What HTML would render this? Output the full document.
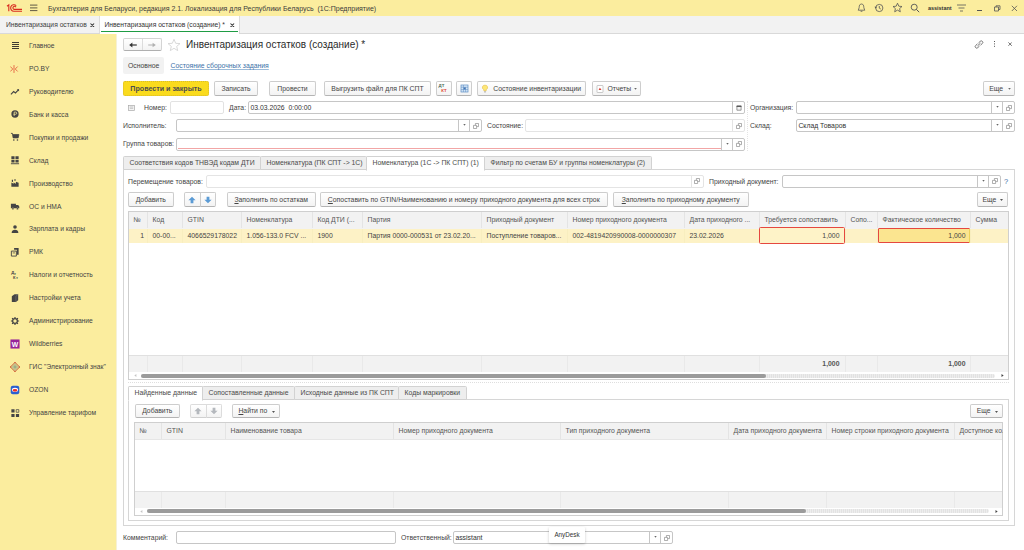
<!DOCTYPE html>
<html lang="ru">
<head>
<meta charset="utf-8">
<title>Инвентаризация остатков (создание) *</title>
<style>
*{box-sizing:border-box;margin:0;padding:0}
html,body{width:1024px;height:550px;overflow:hidden;background:#fff}
body{font-family:"Liberation Sans",sans-serif;font-size:6.85px;color:#444;position:relative;line-height:1}
.a{position:absolute;white-space:pre}
.t{position:absolute;white-space:pre;line-height:8px;height:8px}
#top{left:0;top:0;width:1024px;height:16px;background:#fbed9e}
#tabs{left:0;top:16px;width:1024px;height:17.5px;background:#f2f2f2;border-bottom:1px solid #d9d9d9}
#side{left:0;top:33.5px;width:117px;height:516.5px;background:#fbed9e;border-right:1px solid #f6f1d6}
.si{position:absolute;left:29px;white-space:pre;line-height:8px;color:#444;font-size:6.7px}
.ic{position:absolute;left:10.3px;width:10px;height:10px;margin-top:.7px}
.btn{position:absolute;border:1px solid #cdcdcd;border-bottom-color:#b4b4b4;border-radius:2px;background:linear-gradient(#fff,#f3f3f3);text-align:center;white-space:pre;color:#444}
.inp{position:absolute;border:1px solid #c6c6c6;border-radius:2px;background:#fff;padding-left:1.4px;white-space:pre;color:#333}
.tab{position:absolute;border:1px solid #d2d2d2;background:#eeeeee;text-align:left;padding-left:5.5px;white-space:pre;color:#4a4a4a;border-radius:1.5px 1.5px 0 0}
.tab.on{background:#fff;border-bottom-color:#fff}
.th{position:absolute;line-height:16.5px;padding-left:4.5px;border-right:1px solid #e4e4e4;white-space:pre;overflow:hidden;color:#555}
.td{position:absolute;height:16px;line-height:16.5px;padding-left:4.5px;white-space:pre;overflow:hidden;color:#444}
</style>
</head>
<body>

<div class="a" id="top"></div>
<svg class="a" style="left:6.3px;top:3.2px" width="17" height="10" viewBox="0 0 17 10">
 <g fill="none" stroke="#d92b1f" stroke-width="1.1">
  <path d="M1 3.2 L2.8 1.8 V8.2"/>
  <path d="M10.2 2.6 A3.3 3.3 0 1 0 8 8.3 H16"/>
  <path d="M10 4.2 A1.6 1.6 0 1 0 8.2 6.4 H16"/>
 </g>
</svg>
<svg class="a" style="left:29.8px;top:4.2px" width="9" height="8" viewBox="0 0 9 8"><g stroke="#4f4a3a" stroke-width=".9"><path d="M0 1.1H7.4M0 3.9H7.4M0 6.6H7.4"/></g></svg>
<div class="t" style="left:48px;top:4.5px;font-size:7px;color:#3c3c3c">Бухгалтерия для Беларуси, редакция 2.1. Локализация для Республики Беларусь  (1С:Предприятие)</div>
<!-- right icons -->
<svg class="a" style="left:857px;top:3px" width="9" height="10" viewBox="0 0 9 10"><path d="M4.5 1 C2.6 1 2.2 2.8 2.2 4.4 C2.2 5.8 1.2 6.6 1.2 7.2 H7.8 C7.8 6.6 6.8 5.8 6.8 4.4 C6.8 2.8 6.4 1 4.5 1Z M3.6 8.3 H5.4" fill="none" stroke="#555" stroke-width=".8"/></svg>
<svg class="a" style="left:874px;top:3px" width="10" height="10" viewBox="0 0 10 10"><circle cx="5.3" cy="5" r="3.6" fill="none" stroke="#555" stroke-width=".8"/><path d="M5.3 3V5.2L6.8 6" fill="none" stroke="#555" stroke-width=".8"/><path d="M0.4 3.8 L1.8 5.6 L3 3.8Z" fill="#555"/></svg>
<svg class="a" style="left:892px;top:2px" width="11" height="11" viewBox="0 0 11 11"><path d="M5.5 1.2 L6.8 4.2 L10 4.5 L7.6 6.6 L8.3 9.8 L5.5 8.1 L2.7 9.8 L3.4 6.6 L1 4.5 L4.2 4.2Z" fill="none" stroke="#555" stroke-width=".8" stroke-linejoin="round"/></svg>
<svg class="a" style="left:910px;top:3px" width="10" height="10" viewBox="0 0 10 10"><circle cx="4.2" cy="4.2" r="3" fill="none" stroke="#555" stroke-width=".9"/><path d="M6.4 6.4L9.2 9.2" stroke="#555" stroke-width="1"/></svg>
<div class="t" style="left:928px;top:5px;font-size:5.45px;font-weight:bold;color:#333;line-height:7px">assistant</div>
<svg class="a" style="left:957px;top:4px" width="10" height="8" viewBox="0 0 10 8"><g stroke="#555" stroke-width=".8"><path d="M0 1H9M1.5 4H7.5M3 7H6"/></g></svg>
<div class="a" style="left:977px;top:10px;width:5px;height:1px;background:#555"></div>
<svg class="a" style="left:994px;top:5px" width="7" height="7" viewBox="0 0 7 7"><path d="M0.5 2H4.5V6H0.5Z M2 2V0.8H6V4.5H4.5" fill="none" stroke="#555" stroke-width=".8"/></svg>
<svg class="a" style="left:1011px;top:5px" width="7" height="7" viewBox="0 0 7 7"><path d="M0.8 0.8L6 6M6 0.8L0.8 6" stroke="#555" stroke-width=".8"/></svg>


<div class="a" id="tabs"></div>
<div class="t" style="left:6px;top:21px;font-size:6.72px;color:#3c3c3c">Инвентаризация остатков</div>
<svg class="a" style="left:90.2px;top:22.7px" width="4.6" height="4.6" viewBox="0 0 4.6 4.6"><path d="M0.5 0.5L4.1 4.1M4.1 0.5L0.5 4.1" stroke="#333" stroke-width="1.05"/></svg>
<div class="a" style="left:98.5px;top:16px;width:1px;height:17px;background:#dcdcdc"></div>
<div class="a" style="left:99.5px;top:16px;width:139.5px;height:17.5px;background:#fff"></div>
<div class="a" style="left:101px;top:30.5px;width:136.5px;height:1.4px;background:#1f9c44"></div>
<div class="a" style="left:239px;top:16px;width:1px;height:17px;background:#dcdcdc"></div>
<div class="t" style="left:104.5px;top:21px;font-size:6.72px;color:#333">Инвентаризация остатков (создание) *</div>
<svg class="a" style="left:230.2px;top:22.7px" width="4.6" height="4.6" viewBox="0 0 4.6 4.6"><path d="M0.5 0.5L4.1 4.1M4.1 0.5L0.5 4.1" stroke="#333" stroke-width="1.05"/></svg>
<!-- sidebar -->
<div class="a" id="side"></div>
<svg class="a" style="left:12px;top:42px" width="7" height="7" viewBox="0 0 7 7" shape-rendering="crispEdges"><g fill="#3d3a33"><rect x="0" y="0" width="7" height="1"/><rect x="0" y="2" width="7" height="1"/><rect x="0" y="4" width="7" height="1"/><rect x="0" y="6" width="7" height="1"/></g></svg><div class="si" style="top:42px">Главное</div>
<svg class="ic" style="top:63.0px" viewBox="0 0 11 11"><g stroke="#e2553a" stroke-width=".9" fill="none"><path d="M4.4 1.2V9.8M0.4 2.8L3 5.5L0.4 8.2M8.4 2.8L5.8 5.5L8.4 8.2"/></g></svg><div class="si" style="top:65px">PO.BY</div>
<svg class="ic" style="top:85.9px" viewBox="0 0 11 11"><path d="M1 8L4 5L6 6.5L9.5 3" fill="none" stroke="#444" stroke-width="1.2"/><path d="M7.5 2.5H10V5Z" fill="#444"/></svg><div class="si" style="top:88px">Руководителю</div>
<svg class="ic" style="top:108.8px" viewBox="0 0 11 11"><circle cx="5.5" cy="5.5" r="4" fill="#444"/><path d="M4.6 7.8V3.4H6.2A1.2 1.2 0 0 1 6.2 5.8H3.8" stroke="#fbed9e" stroke-width=".8" fill="none"/></svg><div class="si" style="top:111px">Банк и касса</div>
<svg class="ic" style="top:131.8px" viewBox="0 0 11 11"><path d="M1 1.5H2.6L3.4 6.5H9L9.8 2.8H3" fill="#444" stroke="#444" stroke-width=".8"/><circle cx="4.2" cy="8.8" r=".9" fill="#444"/><circle cx="8.2" cy="8.8" r=".9" fill="#444"/></svg><div class="si" style="top:134px">Покупки и продажи</div>
<svg class="ic" style="top:154.8px" viewBox="0 0 11 11"><path d="M1.5 1.5H5V4.6H1.5ZM6 1.5H9.5V4.6H6ZM1.5 5.4H5V8.2H1.5ZM6 5.4H9.5V8.2H6Z" fill="#444"/><path d="M1 9.6H10" stroke="#444" stroke-width="1"/></svg><div class="si" style="top:157px">Склад</div>
<svg class="ic" style="top:177.7px" viewBox="0 0 11 11"><path d="M1.5 9.5V5L4 6.2V5L6.5 6.2V4L9.5 5.2V9.5Z" fill="#444"/><path d="M2 4V2H3.3V4.5Z" fill="#444"/><path d="M4.5 2.2l1-1 1 1-1 1z" fill="#444"/></svg><div class="si" style="top:180px">Производство</div>
<svg class="ic" style="top:200.7px" viewBox="0 0 11 11"><path d="M1 3H6.5V8H1ZM6.5 4.5H9L10.2 6V8H6.5Z" fill="#444"/><circle cx="3.2" cy="8.5" r="1.1" fill="#444" stroke="#fbed9e" stroke-width=".4"/><circle cx="8.2" cy="8.5" r="1.1" fill="#444" stroke="#fbed9e" stroke-width=".4"/></svg><div class="si" style="top:203px">ОС и НМА</div>
<svg class="ic" style="top:223.6px" viewBox="0 0 11 11"><circle cx="5.5" cy="3.3" r="2" fill="#444"/><path d="M1.8 9.8C1.8 7.4 3.4 6.2 5.5 6.2S9.2 7.4 9.2 9.8Z" fill="#444"/></svg><div class="si" style="top:225px">Зарплата и кадры</div>
<svg class="ic" style="top:246.5px" viewBox="0 0 11 11"><path d="M1.5 4.5H7V10H1.5Z" fill="none" stroke="#444" stroke-width="1"/><path d="M4.5 1H9.5V8.5H7.5V3H4.5Z" fill="#444"/><path d="M3 6.5H5.5" stroke="#444" stroke-width=".8"/></svg><div class="si" style="top:248px">РМК</div>
<svg class="ic" style="top:269.5px" viewBox="0 0 11 11"><g fill="#444" font-family="Liberation Sans, sans-serif" font-weight="bold" font-size="4.5"><text x="1.5" y="4.6">Д</text><text x="4.5" y="5.2">т</text><text x="3.4" y="9.6">К</text><text x="6.5" y="10">т</text></g></svg><div class="si" style="top:271px">Налоги и отчетность</div>
<svg class="ic" style="top:292.4px" viewBox="0 0 11 11"><path d="M2 3.5L5 1.5H9V8L6.5 10H2Z" fill="#444"/><path d="M6.5 3.5V10M6.5 3.5L9 1.5" stroke="#888" stroke-width=".5" fill="none"/></svg><div class="si" style="top:294px">Настройки учета</div>
<svg class="ic" style="top:315.4px" viewBox="0 0 11 11"><circle cx="5.5" cy="5.5" r="2.6" fill="none" stroke="#444" stroke-width="1.4"/><g stroke="#444" stroke-width="1.3"><path d="M5.5 1V2.4M5.5 8.6V10M1 5.5H2.4M8.6 5.5H10M2.3 2.3L3.3 3.3M7.7 7.7L8.7 8.7M8.7 2.3L7.7 3.3M2.3 8.7L3.3 7.7"/></g></svg><div class="si" style="top:317px">Администрирование</div>
<svg class="ic" style="top:338.3px" viewBox="0 0 11 11"><rect x="0.5" y="0.5" width="10" height="10" fill="#96249a"/><text x="5.5" y="8.3" font-family="Liberation Sans, sans-serif" font-weight="bold" font-size="7.5" fill="#fff" text-anchor="middle">W</text></svg><div class="si" style="top:340px">Wildberries</div>
<svg class="ic" style="top:361.3px" viewBox="0 0 11 11"><path d="M5.5 0.3L10.7 5.5L5.5 10.7L0.3 5.5Z" fill="#c9c38a" stroke="#d8643c" stroke-width=".9"/><circle cx="5.5" cy="5.5" r="1.6" fill="#9bb08a"/><g fill="#d8643c"><circle cx="5.5" cy="0.6" r=".8"/><circle cx="5.5" cy="10.4" r=".8"/><circle cx="0.6" cy="5.5" r=".8"/><circle cx="10.4" cy="5.5" r=".8"/></g></svg><div class="si" style="top:363px">ГИС "Электронный знак"</div>
<svg class="ic" style="top:384.2px" viewBox="0 0 11 11"><rect x="0.8" y="0.8" width="9.4" height="9.4" rx="2.2" fill="#2b5fd0"/><ellipse cx="5.5" cy="5.3" rx="3.4" ry="2.4" fill="#fff"/><ellipse cx="5.5" cy="5.8" rx="2.6" ry="1.5" fill="#e8302a"/></svg><div class="si" style="top:386px">OZON</div>
<svg class="ic" style="top:407.2px" viewBox="0 0 11 11"><path d="M1.5 1.5H5V5H1.5ZM1.5 6.5H5V10H1.5ZM6.5 6.5H10V10H6.5Z" fill="#444"/><path d="M6.8 1.8H9.7V4.7H6.8Z" fill="none" stroke="#444" stroke-width=".8"/></svg><div class="si" style="top:409px">Управление тарифом</div>
<div class="btn" style="left:123px;top:38px;width:39px;height:12.5px;border-color:#d4d4d4;border-bottom-color:#b0b0b0"></div>
<div class="a" style="left:142px;top:39px;width:1px;height:10.5px;background:#dcdcdc"></div>
<svg class="a" style="left:129px;top:41.5px" width="8" height="6" viewBox="0 0 8 6"><path d="M7.8 3H2.5" fill="none" stroke="#333" stroke-width="1.2"/><path d="M0.2 3L3.4 0.6V5.4Z" fill="#333"/></svg>
<svg class="a" style="left:148px;top:41.5px" width="8" height="6" viewBox="0 0 8 6"><path d="M0.2 3H5.5" fill="none" stroke="#b0b0b0" stroke-width="1"/><path d="M7.8 3L4.6 0.7V5.3Z" fill="#b0b0b0"/></svg>
<svg class="a" style="left:167px;top:37.6px" width="14" height="14" viewBox="0 0 14 14"><path d="M7 1.3 L8.7 5.3 L13 5.6 L9.7 8.4 L10.7 12.6 L7 10.3 L3.3 12.6 L4.3 8.4 L1 5.6 L5.3 5.3Z" fill="none" stroke="#cfcfcf" stroke-width=".8" stroke-linejoin="round"/></svg>
<div class="a" style="left:186px;top:38px;font-size:10px;line-height:13px;color:#2b2b2b">Инвентаризация остатков (создание) *</div>
<svg class="a" style="left:973.5px;top:39.5px" width="10" height="9" viewBox="0 0 10 9"><g fill="none" stroke="#6e6e6e" stroke-width=".9" stroke-linecap="round" transform="rotate(-42 5 4.5)"><path d="M3.9 3H1.9A1.5 1.5 0 0 0 1.9 6H3.9"/><path d="M6.1 3H8.1A1.5 1.5 0 0 1 8.1 6H6.1"/><path d="M3.4 4.5H6.6"/></g></svg>
<div class="a" style="left:993.7px;top:41px;width:1.2px;height:1.2px;background:#555;box-shadow:0 2.4px 0 #555,0 4.8px 0 #555"></div>
<svg class="a" style="left:1008.2px;top:42px" width="4.2" height="4.2" viewBox="0 0 4.2 4.2"><path d="M0.4 0.4L3.8 3.8M3.8 0.4L0.4 3.8" stroke="#666" stroke-width=".9"/></svg>
<div class="a" style="left:123px;top:57px;width:41px;height:17px;background:#f2f2f2;border-radius:2px"></div>
<div class="t" style="left:128px;top:62px;color:#444">Основное</div>
<div class="t" style="left:170.5px;top:62px;color:#3d72a8;text-decoration:underline;text-decoration-color:#9dbbd8;text-decoration-thickness:.7px;text-underline-offset:1px">Состояние сборочных задания</div>
<div class="btn" style="left:123px;top:81px;width:86px;height:15px;line-height:13px;background:#fadb1e;border:1px dotted #d9bd2a;font-weight:bold;color:#4c4c50;font-size:7.12px;padding-top:1px">Провести и закрыть</div>
<div class="btn" style="left:214px;top:81px;width:44px;height:15px;line-height:13px;">Записать</div>
<div class="btn" style="left:269px;top:81px;width:47px;height:15px;line-height:13px;">Провести</div>
<div class="btn" style="left:324px;top:81px;width:107px;height:15px;line-height:13px;">Выгрузить файл для ПК СПТ</div>
<div class="btn" style="left:436px;top:81px;width:16px;height:15px;line-height:13px;"></div>
<div class="a" style="left:438.6px;top:84.3px;font-size:4.3px;font-weight:bold;line-height:4.3px;color:#4b6a58">ДТ<br><span style="color:#e0402f;padding-left:2.6px">КТ</span></div>
<div class="btn" style="left:456px;top:81px;width:16px;height:15px;line-height:13px;"></div>
<svg class="a" style="left:459.5px;top:84px" width="9" height="9" viewBox="0 0 9 9"><rect x="1" y="1" width="7" height="7" fill="#dcebf9" stroke="#5b8cc4" stroke-width=".7"/><path d="M1 3.2H8M3.4 1V8M5.6 3.2V8M1 5.6H8" stroke="#5b8cc4" stroke-width=".55"/><rect x="3.6" y="3.4" width="2" height="2" fill="#3f74b3"/></svg>
<div class="btn" style="left:477px;top:81px;width:109px;height:15px;line-height:13px;">      Состояние инвентаризации</div>
<svg class="a" style="left:481px;top:84px" width="8" height="10" viewBox="0 0 8 10"><path d="M4 1.2A2.3 2.3 0 0 0 2.8 5.6V6.8H5.2V5.6A2.3 2.3 0 0 0 4 1.2Z" fill="#fde777" stroke="#e3b838" stroke-width=".55"/><path d="M3 7.9H5" stroke="#9a9a9a" stroke-width=".8"/></svg>
<div class="btn" style="left:592px;top:81px;width:49px;height:15px;line-height:13px;">     Отчеты  </div>
<svg class="a" style="left:596px;top:85px" width="8" height="8" viewBox="0 0 8 8"><rect x="1" y=".5" width="6" height="7" rx=".6" fill="#fff" stroke="#a8a8a8" stroke-width=".6"/><path d="M2.6 5L3.8 2.8L5.2 4.2V5Z" fill="#d9443a"/></svg>
<svg class="a" style="left:633.5px;top:88px" width="3" height="2" viewBox="0 0 3 2"><path d="M0.2 0H2.8L1.5 1.8Z" fill="#666"/></svg>
<div class="btn" style="left:983px;top:81px;width:32px;height:15px;line-height:13px;">Еще   </div>
<svg class="a" style="left:1007.5px;top:88px" width="3" height="2" viewBox="0 0 3 2"><path d="M0.2 0H2.8L1.5 1.8Z" fill="#666"/></svg>
<svg class="a" style="left:128px;top:104.5px" width="7" height="6" viewBox="0 0 7 6"><rect x=".4" y=".4" width="6.2" height="5.2" fill="#f4f4f4" stroke="#aaa" stroke-width=".7"/><path d="M1.8 2H5.2M1.8 3.4H5.2" stroke="#aaa" stroke-width=".6"/></svg>
<div class="t" style="left:144px;top:103.5px;">Номер:</div>
<div class="inp" style="left:170px;top:101px;width:54px;height:13px;line-height:11px;border-color:#e2e2e2;"></div>
<div class="t" style="left:229px;top:103.5px;">Дата:</div>
<div class="inp" style="left:248px;top:101px;width:497px;height:13px;line-height:11px;border-color:#c6c6c6;">03.03.2026  0:00:00</div>
<div class="a" style="left:732px;top:102px;width:1px;height:11px;background:#c6c6c6"></div>
<svg class="a" style="left:735.9px;top:104.5px" width="6" height="6" viewBox="0 0 6 6"><path d="M0.9 1H5.1V5.2H0.9Z" fill="#f4f4f4" stroke="#707070" stroke-width=".7"/><path d="M0.6 1.3H5.4" stroke="#555" stroke-width="1.3"/></svg>
<div class="t" style="left:750px;top:103.5px;">Организация:</div>
<div class="inp" style="left:796px;top:101px;width:219px;height:13px;line-height:11px;border-color:#c6c6c6;"></div>
<div class="a" style="left:991px;top:102px;width:1px;height:11px;background:#c6c6c6"></div>
<svg class="a" style="left:995.8px;top:106.0px" width="3" height="2" viewBox="0 0 3 2"><path d="M0.3 0H2.7L1.5 1.7Z" fill="#666"/></svg>
<div class="a" style="left:1002px;top:102px;width:1px;height:11px;background:#c6c6c6"></div>
<svg class="a" style="left:1005.9px;top:104.5px" width="6" height="6" viewBox="0 0 6 6"><path d="M2.4 0.5H5.5V3.6H2.4Z" fill="none" stroke="#7a7a7a" stroke-width=".6" stroke-linejoin="miter"/><path d="M0.5 2.4H3.6V5.5H0.5Z" fill="#fff" stroke="#7a7a7a" stroke-width=".6" stroke-linejoin="miter"/></svg>
<div class="a" style="left:746.5px;top:101px;width:0;height:50px;border-left:1px dotted #e4e4e4"></div>
<div class="t" style="left:123px;top:122px;">Исполнитель:</div>
<div class="inp" style="left:176px;top:119px;width:306px;height:13px;line-height:11px;border-color:#c6c6c6;"></div>
<div class="a" style="left:458px;top:120px;width:1px;height:11px;background:#c6c6c6"></div>
<svg class="a" style="left:462.8px;top:124.0px" width="3" height="2" viewBox="0 0 3 2"><path d="M0.3 0H2.7L1.5 1.7Z" fill="#666"/></svg>
<div class="a" style="left:469px;top:120px;width:1px;height:11px;background:#c6c6c6"></div>
<svg class="a" style="left:472.9px;top:122.5px" width="6" height="6" viewBox="0 0 6 6"><path d="M2.4 0.5H5.5V3.6H2.4Z" fill="none" stroke="#7a7a7a" stroke-width=".6" stroke-linejoin="miter"/><path d="M0.5 2.4H3.6V5.5H0.5Z" fill="#fff" stroke="#7a7a7a" stroke-width=".6" stroke-linejoin="miter"/></svg>
<div class="t" style="left:487px;top:122px;">Состояние:</div>
<div class="inp" style="left:525px;top:119px;width:220px;height:13px;line-height:11px;border-color:#e4e4e4;"></div>
<div class="a" style="left:732px;top:120px;width:1px;height:11px;background:#e4e4e4"></div>
<svg class="a" style="left:735.9px;top:122.5px" width="6" height="6" viewBox="0 0 6 6"><path d="M2.4 0.5H5.5V3.6H2.4Z" fill="none" stroke="#7a7a7a" stroke-width=".6" stroke-linejoin="miter"/><path d="M0.5 2.4H3.6V5.5H0.5Z" fill="#fff" stroke="#7a7a7a" stroke-width=".6" stroke-linejoin="miter"/></svg>
<div class="t" style="left:750px;top:122px;">Склад:</div>
<div class="inp" style="left:796px;top:119px;width:219px;height:13px;line-height:11px;border-color:#c6c6c6;">Склад Товаров</div>
<div class="a" style="left:991px;top:120px;width:1px;height:11px;background:#c6c6c6"></div>
<svg class="a" style="left:995.8px;top:124.0px" width="3" height="2" viewBox="0 0 3 2"><path d="M0.3 0H2.7L1.5 1.7Z" fill="#666"/></svg>
<div class="a" style="left:1002px;top:120px;width:1px;height:11px;background:#c6c6c6"></div>
<svg class="a" style="left:1005.9px;top:122.5px" width="6" height="6" viewBox="0 0 6 6"><path d="M2.4 0.5H5.5V3.6H2.4Z" fill="none" stroke="#7a7a7a" stroke-width=".6" stroke-linejoin="miter"/><path d="M0.5 2.4H3.6V5.5H0.5Z" fill="#fff" stroke="#7a7a7a" stroke-width=".6" stroke-linejoin="miter"/></svg>
<div class="t" style="left:123px;top:140px;">Группа товаров:</div>
<div class="inp" style="left:176px;top:137.5px;width:569px;height:13.0px;line-height:11.0px;border-color:#c6c6c6;"></div>
<div class="a" style="left:721px;top:138.5px;width:1px;height:11.0px;background:#c6c6c6"></div>
<svg class="a" style="left:725.8px;top:142.5px" width="3" height="2" viewBox="0 0 3 2"><path d="M0.3 0H2.7L1.5 1.7Z" fill="#666"/></svg>
<div class="a" style="left:732px;top:138.5px;width:1px;height:11.0px;background:#c6c6c6"></div>
<svg class="a" style="left:735.9px;top:141.0px" width="6" height="6" viewBox="0 0 6 6"><path d="M2.4 0.5H5.5V3.6H2.4Z" fill="none" stroke="#7a7a7a" stroke-width=".6" stroke-linejoin="miter"/><path d="M0.5 2.4H3.6V5.5H0.5Z" fill="#fff" stroke="#7a7a7a" stroke-width=".6" stroke-linejoin="miter"/></svg>
<div class="a" style="left:178px;top:148px;width:543px;height:1px;background:#f2a6a6"></div>
<div class="a" style="left:123px;top:169px;width:892px;height:357px;border:1px solid #d6d6d6;background:#fff"></div>
<div class="tab" style="left:123px;top:156px;width:138px;height:14px;line-height:12.4px">Соответствия кодов ТНВЭД кодам ДТИ</div>
<div class="tab" style="left:260px;top:156px;width:107px;height:14px;line-height:12.4px">Номенклатура (ПК СПТ -&gt; 1С)</div>
<div class="tab" style="left:484px;top:156px;width:168px;height:14px;line-height:12.4px">Фильтр по счетам БУ и группы номенклатуры (2)</div>
<div class="tab on" style="left:366px;top:156px;width:119px;height:15px;line-height:12.4px">Номенклатура (1С -&gt; ПК СПТ) (1)</div>
<div class="t" style="left:128px;top:177.5px;">Перемещение товаров:</div>
<div class="inp" style="left:206px;top:174.5px;width:497.5px;height:13.0px;line-height:11.0px;border-color:#e4e4e4;"></div>
<div class="a" style="left:690.5px;top:175.5px;width:1px;height:11.0px;background:#e4e4e4"></div>
<svg class="a" style="left:694.4px;top:178.0px" width="6" height="6" viewBox="0 0 6 6"><path d="M2.4 0.5H5.5V3.6H2.4Z" fill="none" stroke="#7a7a7a" stroke-width=".6" stroke-linejoin="miter"/><path d="M0.5 2.4H3.6V5.5H0.5Z" fill="#fff" stroke="#7a7a7a" stroke-width=".6" stroke-linejoin="miter"/></svg>
<div class="t" style="left:709px;top:177.5px;">Приходный документ:</div>
<div class="inp" style="left:782px;top:174.5px;width:219px;height:13.0px;line-height:11.0px;border-color:#c6c6c6;"></div>
<div class="a" style="left:977px;top:175.5px;width:1px;height:11.0px;background:#c6c6c6"></div>
<svg class="a" style="left:981.8px;top:179.5px" width="3" height="2" viewBox="0 0 3 2"><path d="M0.3 0H2.7L1.5 1.7Z" fill="#666"/></svg>
<div class="a" style="left:988px;top:175.5px;width:1px;height:11.0px;background:#c6c6c6"></div>
<svg class="a" style="left:991.9px;top:178.0px" width="6" height="6" viewBox="0 0 6 6"><path d="M2.4 0.5H5.5V3.6H2.4Z" fill="none" stroke="#7a7a7a" stroke-width=".6" stroke-linejoin="miter"/><path d="M0.5 2.4H3.6V5.5H0.5Z" fill="#fff" stroke="#7a7a7a" stroke-width=".6" stroke-linejoin="miter"/></svg>
<div class="t" style="left:1004px;top:177.5px;color:#3a6ea5;font-size:7.5px">?</div>
<div class="btn" style="left:128px;top:192px;width:45.5px;height:15px;line-height:13px;">Добавить</div>
<div class="btn" style="left:184px;top:192px;width:16.5px;height:15px;line-height:13px;border-radius:2px 0 0 2px"></div>
<div class="btn" style="left:199.5px;top:192px;width:16.5px;height:15px;line-height:13px;border-radius:0 2px 2px 0"></div>
<svg class="a" style="left:188px;top:195.8px" width="8" height="8" viewBox="0 0 8 8"><path d="M4 0.8L7.6 4.3H5.4V7.2H2.6V4.3H0.4Z" fill="#5b9bd5"/></svg>
<svg class="a" style="left:203.5px;top:195.8px" width="8" height="8" viewBox="0 0 8 8"><path d="M4 7.2L7.6 3.7H5.4V0.8H2.6V3.7H0.4Z" fill="#5b9bd5"/></svg>
<div class="btn" style="left:227px;top:192px;width:88.5px;height:15px;line-height:13px;"><u>З</u>аполнить по остаткам</div>
<div class="btn" style="left:320px;top:192px;width:287.5px;height:15px;line-height:13px;"><u>С</u>опоставить по GTIN/Наименованию и номеру приходного документа для всех строк</div>
<div class="btn" style="left:613px;top:192px;width:135.5px;height:15px;line-height:13px;"><u>З</u>аполнить по приходному документу</div>
<div class="btn" style="left:976.5px;top:192px;width:31.5px;height:15px;line-height:13px;">Еще   </div>
<svg class="a" style="left:1000px;top:199px" width="3" height="2" viewBox="0 0 3 2"><path d="M0 0H3L1.5 1.9Z" fill="#555"/></svg>
<div class="a" style="left:128px;top:211px;width:881px;height:169px;border:1px solid #cfcfcf;background:#fff"></div>
<div class="a" style="left:129px;top:212px;width:879px;height:16.8px;background:#f2f2f2"></div>
<div class="th" style="left:129px;top:212px;width:19px;height:16px;">№</div>
<div class="th" style="left:148px;top:212px;width:35px;height:16px;">Код</div>
<div class="th" style="left:183px;top:212px;width:59px;height:16px;">GTIN</div>
<div class="th" style="left:242px;top:212px;width:71px;height:16px;">Номенклатура</div>
<div class="th" style="left:313px;top:212px;width:50px;height:16px;">Код ДТИ (...</div>
<div class="th" style="left:363px;top:212px;width:119px;height:16px;">Партия</div>
<div class="th" style="left:482px;top:212px;width:86px;height:16px;">Приходный документ</div>
<div class="th" style="left:568px;top:212px;width:117px;height:16px;">Номер приходного документа</div>
<div class="th" style="left:685px;top:212px;width:75px;height:16px;">Дата приходного ...</div>
<div class="th" style="left:760px;top:212px;width:86px;height:16px;">Требуется сопоставить</div>
<div class="th" style="left:846px;top:212px;width:32px;height:16px;">Сопо...</div>
<div class="th" style="left:878px;top:212px;width:93px;height:16px;">Фактическое количество</div>
<div class="th" style="left:971px;top:212px;width:38px;height:16px;border-right:none;">Сумма</div>
<div class="a" style="left:129px;top:228.8px;width:879px;height:14.4px;background:#fdf2c6"></div>
<div class="td" style="left:129px;top:227.9px;width:19px;text-align:right;padding-right:4px;padding-left:0;">1</div>
<div class="td" style="left:148px;top:227.9px;width:35px;">00-00...</div>
<div class="td" style="left:183px;top:227.9px;width:59px;">4066529178022</div>
<div class="td" style="left:242px;top:227.9px;width:71px;">1.056-133.0 FCV ...</div>
<div class="td" style="left:313px;top:227.9px;width:50px;">1900</div>
<div class="td" style="left:363px;top:227.9px;width:119px;">Партия 0000-000531 от 23.02.20...</div>
<div class="td" style="left:482px;top:227.9px;width:86px;">Поступление товаров...</div>
<div class="td" style="left:568px;top:227.9px;width:117px;">002-4819420990008-0000000307</div>
<div class="td" style="left:685px;top:227.9px;width:75px;">23.02.2026</div>
<div class="td" style="left:760px;top:227.9px;width:86px;"></div>
<div class="td" style="left:846px;top:227.9px;width:32px;"></div>
<div class="td" style="left:878px;top:227.9px;width:93px;"></div>
<div class="td" style="left:971px;top:227.9px;width:38px;"></div>
<div class="a" style="left:147px;top:228.8px;width:1px;height:14.4px;background:#f8eebf"></div>
<div class="a" style="left:182px;top:228.8px;width:1px;height:14.4px;background:#f8eebf"></div>
<div class="a" style="left:241px;top:228.8px;width:1px;height:14.4px;background:#f8eebf"></div>
<div class="a" style="left:312px;top:228.8px;width:1px;height:14.4px;background:#f8eebf"></div>
<div class="a" style="left:362px;top:228.8px;width:1px;height:14.4px;background:#f8eebf"></div>
<div class="a" style="left:481px;top:228.8px;width:1px;height:14.4px;background:#f8eebf"></div>
<div class="a" style="left:567px;top:228.8px;width:1px;height:14.4px;background:#f8eebf"></div>
<div class="a" style="left:684px;top:228.8px;width:1px;height:14.4px;background:#f8eebf"></div>
<div class="a" style="left:759px;top:228.8px;width:1px;height:14.4px;background:#f8eebf"></div>
<div class="a" style="left:845px;top:228.8px;width:1px;height:14.4px;background:#f8eebf"></div>
<div class="a" style="left:877px;top:228.8px;width:1px;height:14.4px;background:#f8eebf"></div>
<div class="a" style="left:970px;top:228.8px;width:1px;height:14.4px;background:#f8eebf"></div>
<div class="a" style="left:759px;top:227px;width:86px;height:17px;border:1.5px solid #e5483f;border-radius:1.5px;background:#fef3c8"></div>
<div class="td" style="left:759px;top:227.9px;width:85px;text-align:right;padding-right:4.5px">1,000</div>
<div class="a" style="left:877.5px;top:228.2px;width:92px;height:15px;border:1.4px solid #e5483f;border-radius:1px;background:#fbe590"></div>
<div class="a" style="left:969.3px;top:228.8px;width:.8px;height:14.4px;background:#ecd25a"></div>
<div class="td" style="left:878px;top:227.9px;width:92px;text-align:right;padding-right:4.5px">1,000</div>
<div class="a" style="left:129px;top:355px;width:879px;height:16.5px;background:#f2f2f2;border-top:1px solid #e0e0e0"></div>
<div class="a" style="left:147px;top:356px;width:1px;height:15.5px;background:#e9e9e9"></div>
<div class="a" style="left:182px;top:356px;width:1px;height:15.5px;background:#e9e9e9"></div>
<div class="a" style="left:241px;top:356px;width:1px;height:15.5px;background:#e9e9e9"></div>
<div class="a" style="left:312px;top:356px;width:1px;height:15.5px;background:#e9e9e9"></div>
<div class="a" style="left:362px;top:356px;width:1px;height:15.5px;background:#e9e9e9"></div>
<div class="a" style="left:481px;top:356px;width:1px;height:15.5px;background:#e9e9e9"></div>
<div class="a" style="left:567px;top:356px;width:1px;height:15.5px;background:#e9e9e9"></div>
<div class="a" style="left:684px;top:356px;width:1px;height:15.5px;background:#e9e9e9"></div>
<div class="a" style="left:759px;top:356px;width:1px;height:15.5px;background:#e9e9e9"></div>
<div class="a" style="left:845px;top:356px;width:1px;height:15.5px;background:#e9e9e9"></div>
<div class="a" style="left:877px;top:356px;width:1px;height:15.5px;background:#e9e9e9"></div>
<div class="a" style="left:970px;top:356px;width:1px;height:15.5px;background:#e9e9e9"></div>
<div class="td" style="left:759px;top:355.5px;width:85px;text-align:right;padding-right:4.5px;font-weight:bold;color:#555">1,000</div>
<div class="td" style="left:878px;top:355.5px;width:92px;text-align:right;padding-right:4.5px;font-weight:bold;color:#555">1,000</div>
<div class="a" style="left:141px;top:373.7px;width:854px;height:4px;background:repeating-linear-gradient(90deg,#e2e2e2 0 1px,#ededed 1px 2px);border-radius:2px"></div>
<div class="a" style="left:141px;top:373.7px;width:625px;height:4px;background:#9b9b9b;border-radius:2px"></div>
<svg class="a" style="left:133.5px;top:374.2px" width="3" height="3" viewBox="0 0 3 3"><path d="M2.4 0V3L0.3 1.5Z" fill="#c4c4c4"/></svg>
<svg class="a" style="left:1000.5px;top:374.2px" width="3" height="3" viewBox="0 0 3 3"><path d="M0.5 0V3L2.7 1.5Z" fill="#444"/></svg>
<div class="a" style="left:128px;top:382px;width:881px;height:0;border-top:1px dotted #dedede"></div>
<div class="a" style="left:128px;top:399px;width:881px;height:122px;border:1px solid #d6d6d6;background:#fff"></div>
<div class="tab" style="left:202px;top:385.5px;width:93px;height:14.5px;line-height:12.9px">Сопоставленные данные</div>
<div class="tab" style="left:294px;top:385.5px;width:105px;height:14.5px;line-height:12.9px">Исходные данные из ПК СПТ</div>
<div class="tab" style="left:398px;top:385.5px;width:69px;height:14.5px;line-height:12.9px">Коды маркировки</div>
<div class="tab on" style="left:128px;top:385.5px;width:75px;height:15.5px;line-height:12.9px">Найденные данные</div>
<div class="btn" style="left:134.5px;top:404px;width:45.5px;height:14px;line-height:12px;">Добавить</div>
<div class="btn" style="left:190px;top:404px;width:16.5px;height:14px;line-height:12px;border-radius:2px 0 0 2px;border-color:#dcdcdc;border-bottom-color:#d0d0d0"></div>
<div class="btn" style="left:205.5px;top:404px;width:16.5px;height:14px;line-height:12px;border-radius:0 2px 2px 0;border-color:#dcdcdc;border-bottom-color:#d0d0d0"></div>
<svg class="a" style="left:194px;top:407.3px" width="8" height="8" viewBox="0 0 8 8"><path d="M4 0.8L7.6 4.3H5.4V7.2H2.6V4.3H0.4Z" fill="#b4b8bd"/></svg>
<svg class="a" style="left:209.5px;top:407.3px" width="8" height="8" viewBox="0 0 8 8"><path d="M4 7.2L7.6 3.7H5.4V0.8H2.6V3.7H0.4Z" fill="#b4b8bd"/></svg>
<div class="btn" style="left:232px;top:404px;width:47.5px;height:14px;line-height:12px;"><u>Н</u>айти по   </div>
<svg class="a" style="left:272px;top:410.5px" width="3" height="2" viewBox="0 0 3 2"><path d="M0 0H3L1.5 1.9Z" fill="#555"/></svg>
<div class="btn" style="left:970px;top:404px;width:33px;height:14px;line-height:12px;">Еще   </div>
<svg class="a" style="left:995px;top:410.5px" width="3" height="2" viewBox="0 0 3 2"><path d="M0 0H3L1.5 1.9Z" fill="#555"/></svg>
<div class="a" style="left:134px;top:422px;width:869px;height:94px;border:1px solid #cfcfcf;background:#fff"></div>
<div class="a" style="left:135px;top:423px;width:867px;height:16.5px;background:#f2f2f2;border-bottom:1px solid #e6e6e6"></div>
<div class="th" style="left:135px;top:423px;width:27px;height:16px;">№</div>
<div class="th" style="left:162px;top:423px;width:64px;height:16px;">GTIN</div>
<div class="th" style="left:226px;top:423px;width:168px;height:16px;">Наименование товара</div>
<div class="th" style="left:394px;top:423px;width:167px;height:16px;">Номер приходного документа</div>
<div class="th" style="left:561px;top:423px;width:168px;height:16px;">Тип приходного документа</div>
<div class="th" style="left:729px;top:423px;width:98px;height:16px;">Дата приходного документа</div>
<div class="th" style="left:827px;top:423px;width:128px;height:16px;">Номер строки приходного документа</div>
<div class="th" style="left:955px;top:423px;width:48px;height:16px;border-right:none;">Доступное ко...</div>
<div class="a" style="left:135px;top:491px;width:867px;height:16.5px;background:#f2f2f2;border-top:1px solid #e0e0e0"></div>
<div class="a" style="left:161px;top:492px;width:1px;height:15.5px;background:#e9e9e9"></div>
<div class="a" style="left:225px;top:492px;width:1px;height:15.5px;background:#e9e9e9"></div>
<div class="a" style="left:393px;top:492px;width:1px;height:15.5px;background:#e9e9e9"></div>
<div class="a" style="left:560px;top:492px;width:1px;height:15.5px;background:#e9e9e9"></div>
<div class="a" style="left:728px;top:492px;width:1px;height:15.5px;background:#e9e9e9"></div>
<div class="a" style="left:826px;top:492px;width:1px;height:15.5px;background:#e9e9e9"></div>
<div class="a" style="left:954px;top:492px;width:1px;height:15.5px;background:#e9e9e9"></div>
<div class="a" style="left:147px;top:509px;width:842px;height:4px;background:repeating-linear-gradient(90deg,#e2e2e2 0 1px,#ededed 1px 2px);border-radius:2px"></div>
<div class="a" style="left:147px;top:509px;width:659px;height:4px;background:#9b9b9b;border-radius:2px"></div>
<svg class="a" style="left:139.5px;top:509.5px" width="3" height="3" viewBox="0 0 3 3"><path d="M2.4 0V3L0.3 1.5Z" fill="#c4c4c4"/></svg>
<svg class="a" style="left:994.5px;top:509.5px" width="3" height="3" viewBox="0 0 3 3"><path d="M0.5 0V3L2.7 1.5Z" fill="#444"/></svg>
<div class="t" style="left:123px;top:533.5px;">Комментарий:</div>
<div class="inp" style="left:176px;top:531px;width:220px;height:13px;line-height:11px;border-color:#c6c6c6;"></div>
<div class="t" style="left:401px;top:533.5px;">Ответственный:</div>
<div class="inp" style="left:453px;top:531px;width:220px;height:13px;line-height:11px;border-color:#c6c6c6;">assistant</div>
<div class="a" style="left:649px;top:532px;width:1px;height:11px;background:#c6c6c6"></div>
<svg class="a" style="left:653.8px;top:536.0px" width="3" height="2" viewBox="0 0 3 2"><path d="M0.3 0H2.7L1.5 1.7Z" fill="#666"/></svg>
<div class="a" style="left:660px;top:532px;width:1px;height:11px;background:#c6c6c6"></div>
<svg class="a" style="left:663.9px;top:534.5px" width="6" height="6" viewBox="0 0 6 6"><path d="M2.4 0.5H5.5V3.6H2.4Z" fill="none" stroke="#7a7a7a" stroke-width=".6" stroke-linejoin="miter"/><path d="M0.5 2.4H3.6V5.5H0.5Z" fill="#fff" stroke="#7a7a7a" stroke-width=".6" stroke-linejoin="miter"/></svg>
<div class="a" style="left:549px;top:527px;width:36px;height:15.5px;background:#fff;box-shadow:0 1px 3px rgba(0,0,0,.22);border-radius:1px;font-size:6.3px;line-height:16.5px;text-align:center;color:#333">AnyDesk</div>
</body>
</html>
